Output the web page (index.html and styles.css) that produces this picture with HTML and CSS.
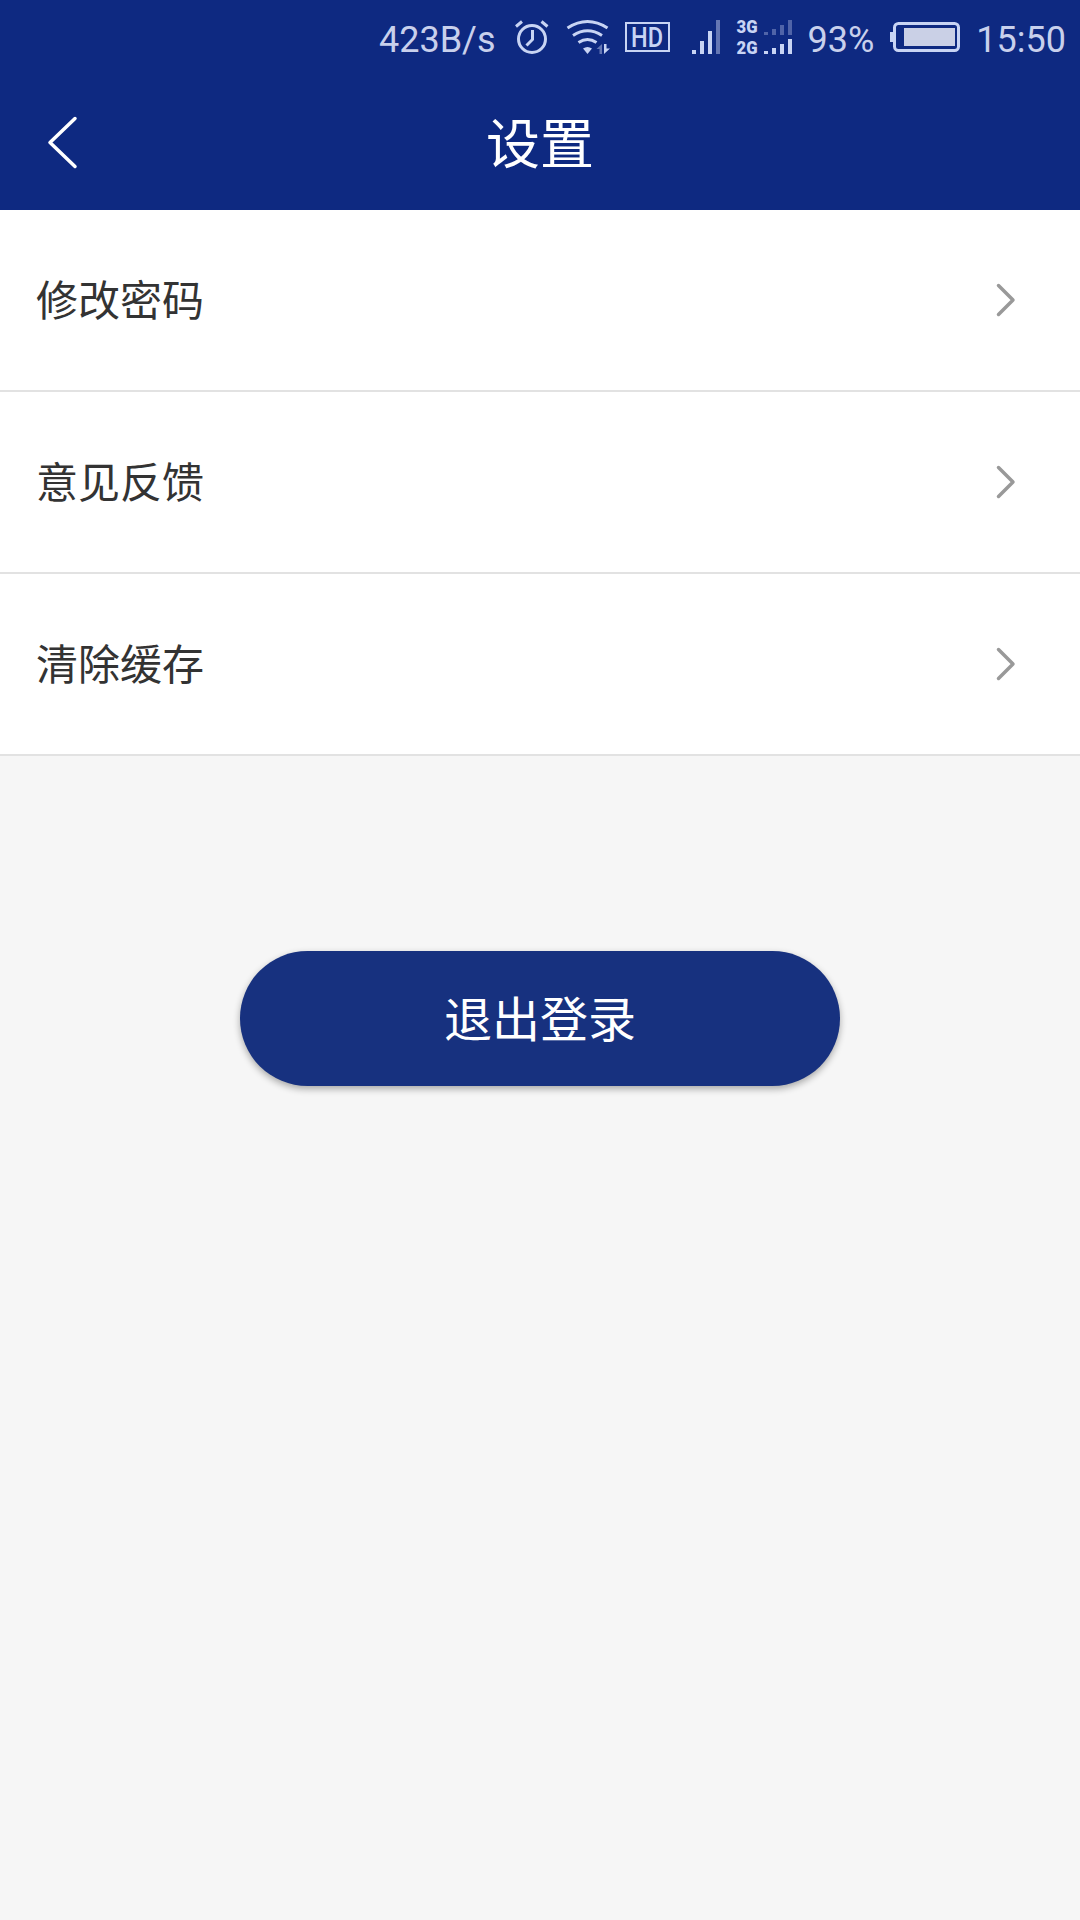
FILE: index.html
```html
<!DOCTYPE html>
<html lang="zh-CN">
<head>
    <meta charset="UTF-8">
    <meta name="viewport" content="width=device-width, initial-scale=1.0">
    <title>设置</title>
    <link rel="stylesheet" href="styles.css">
</head>
<body>

    <header>
        <div class="status-bar">
            <span class="speed">423B/s</span>
            <svg class="alarm" width="36" height="72" viewBox="514 0 36 72" fill="none" stroke="#c8d4f4" stroke-width="3">
                <circle cx="532" cy="39" r="13.5"/>
                <path d="M532.5 30v9.5l-6 6M516 26.500l6-5M541.500 21.500l6 5"/>
            </svg>
            <svg class="wifi" width="44" height="72" viewBox="566 0 44 72" fill="none" stroke="#c8d4f4" stroke-width="3">
                <path d="M567.500 28q20-13 40 0M573 35.500q14.500-9.500 29 0M578.500 42.500q9-6 18 0"/>
                <path d="M583 48.500q4.500-3 9 0l-4.500 5.500z" fill="#c8d4f4" stroke="none"/>
                <path d="M602 44v10h-2.500v-5h-3z" fill="#6577b4" stroke="none"/>
                <path d="M604 44h2.500v4.500h3.500l-6 5.500z" fill="#c8d4f4" stroke="none"/>
            </svg>
            <svg class="hd" width="46" height="72" viewBox="625 0 46 72">
                <rect x="626" y="23" width="43" height="28" fill="none" stroke="#c8d4f4" stroke-width="2"/>
                <text x="631" y="47" font-size="28" font-weight="500" textLength="32" lengthAdjust="spacingAndGlyphs">HD</text>
            </svg>
            <svg class="signal" width="28" height="72" viewBox="692 0 28 72" fill="#c8d4f4">
                <path d="M692 50h4v4h-4zM700 41h4v13h-4zM708 31h4v23h-4z"/>
                <path d="M716 20h4v34h-4z" fill="#6577b4"/>
            </svg>
            <svg class="dual" width="56" height="72" viewBox="736 0 56 72">
                <text x="736.500" y="33" font-size="18" font-weight="900" textLength="21" lengthAdjust="spacingAndGlyphs">3G</text>
                <text x="736.500" y="54" font-size="18" font-weight="900" textLength="21" lengthAdjust="spacingAndGlyphs">2G</text>
                <path d="M764 32h4v3h-4zM772 29h4v6h-4zM780 25h4v10h-4zM788 20h4v15h-4z" fill="#5064a8"/>
                <path d="M764 51h4v3h-4zM772 48h4v6h-4zM780 44h4v10h-4zM788 39h4v15h-4z" fill="#c8d4f4"/>
            </svg>
            <span class="percent">93%</span>
            <svg class="battery" width="70" height="72" viewBox="890 0 70 72">
                <rect x="894.500" y="23.500" width="64" height="27" rx="4" fill="none" stroke="#c8d4f4" stroke-width="3"/>
                <path d="M890 32h4v10h-4z" fill="#c8d4f4"/>
                <path d="M904 28h51v18h-51z" fill="#cad0e6"/>
            </svg>
            <span class="time">15:50</span>
        </div>
        <div class="title-bar">
            <svg class="back" width="32" height="54" viewBox="0 0 32 54">
                <path d="M28 3.500L3 27.500l25 24"/>
            </svg>
            <h1>设置</h1>
        </div>
    </header>

    <ul class="menu">
        <li>
            <span>修改密码</span>
            <svg class="arrow" width="20" height="34" viewBox="0 0 20 34"><path d="M2.500 2.500L17 17 2.500 31.500"/></svg>
        </li>
        <li>
            <span>意见反馈</span>
            <svg class="arrow" width="20" height="34" viewBox="0 0 20 34"><path d="M2.500 2.500L17 17 2.500 31.500"/></svg>
        </li>
        <li>
            <span>清除缓存</span>
            <svg class="arrow" width="20" height="34" viewBox="0 0 20 34"><path d="M2.500 2.500L17 17 2.500 31.500"/></svg>
        </li>
    </ul>

    <button class="logout" type="button">退出登录</button>

</body>
</html>
```
FILE: styles.css
```css
body {
    margin: 0;
    min-height: 100vh;
    background-color: #f6f6f6;
    font-family: Roboto, "Noto Sans CJK SC", sans-serif;
}

header {
    height: 210px;
    background-color: #0e2981;
    color: #fff;
}

.status-bar {
    display: flex;
    justify-content: flex-end;
    height: 72px;
    padding-right: 14px;
    color: #c8d0ec;
    font-size: 36px;
    line-height: 80px;
}

.status-bar svg {
    flex: none;
}

.status-bar text {
    fill: #c8d4f4;
}

.alarm {
    margin: 0 16px 0 18px;
}

.wifi {
    margin-right: 15px;
}

.hd {
    margin-right: 21px;
}

.signal {
    margin-right: 16px;
}

.percent {
    margin: 0 16px;
}

.time {
    margin-left: 16px;
}

.title-bar {
    display: grid;
    grid-template-columns: 1fr auto 1fr;
    align-items: center;
    height: 138px;
    padding: 0 47px;
    box-sizing: border-box;
}

.back {
    align-self: start;
    margin-top: 43px;
}

.back path {
    fill: none;
    stroke: #fff;
    stroke-width: 3.5;
    stroke-linecap: round;
    stroke-linejoin: round;
}

h1 {
    margin: 0;
    padding-top: 5px;
    font-size: 54px;
    font-weight: 400;
    line-height: 138px;
}

.menu {
    margin: 0;
    padding: 0;
    list-style: none;
    background-color: #fff;
}

.menu li {
    display: flex;
    align-items: center;
    justify-content: space-between;
    height: 180px;
    padding: 0 64px 0 36px;
    border-bottom: 2px solid #e2e2e2;
    color: #333;
    font-size: 42px;
}

.menu span {
    padding-bottom: 5px;
}

.arrow path {
    fill: none;
    stroke: #999;
    stroke-width: 3.5;
    stroke-linecap: round;
    stroke-linejoin: round;
}

.logout {
    display: block;
    width: 600px;
    height: 135px;
    margin: 195px auto 0;
    padding: 0 0 5px;
    border: none;
    border-radius: 68px;
    background-color: #17317f;
    box-shadow: 0 3px 7px rgba(0, 0, 0, 0.32);
    color: #fff;
    font-family: inherit;
    font-size: 48px;
}
```
